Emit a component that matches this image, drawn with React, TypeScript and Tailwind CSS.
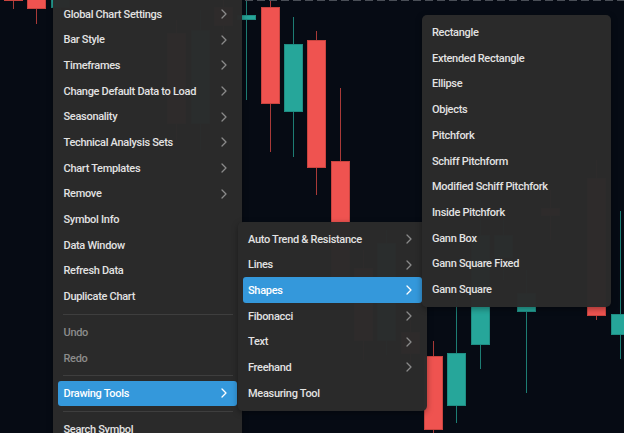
import React from "react";

type Candle = [number, "r" | "t", number, number, number, number];

// x centre, colour, body top, body bottom, wick top, wick bottom
const candles: Candle[] = [
  [13, "r", -20, 0, -30, 9],
  [36.3, "r", -12, 8, -20, 24],
  [59.6, "t", -10, 7, -20, 20],
  [176.3, "r", 33, 123, 20, 140],
  [199.6, "t", 30, 123, 10, 150],
  [223, "r", 7, 25, 0, 40],
  [246.3, "t", 15, 19, -5, 100],
  [269.6, "r", 7, 103, -5, 152],
  [293, "t", 44, 111, 17, 157],
  [316.3, "r", 40, 167, 31, 195],
  [339.6, "r", 161, 277, 88, 300],
  [363, "r", 268, 340, 250, 360],
  [386.3, "t", 243, 340, 230, 355],
  [409.6, "r", 332, 353, 320, 365],
  [433, "r", 356, 429, 341, 440],
  [456.3, "t", 353, 405, 290, 423],
  [479.6, "t", 235, 344, 200, 369],
  [503, "t", 235, 257, 215, 280],
  [526.3, "t", 293, 311, 270, 393],
  [549.6, "r", 208, 215, 190, 240],
  [596.3, "r", 178, 315, 160, 320],
  [619.6, "t", 314, 334, 211, 359],
];

const Chart = () => (
  <svg width={624} height={433} className="block" shapeRendering="crispEdges">
    {candles.map(([x, c, bt, bb, wt, wb], i) => {
      const body = c === "r" ? "#ef5350" : "#26a69a";
      const edge = c === "r" ? "#c9443f" : "#1f8d83";
      const wick = c === "r" ? "#a83a38" : "#1d7d74";
      const left = Math.round(x - 9);
      return (
        <g key={i}>
          <rect x={Math.round(x)} y={wt} width={1} height={wb - wt} fill={wick} />
          <rect x={left} y={bt} width={18} height={Math.max(bb - bt, 2)} fill={body} stroke={edge} strokeWidth={1} />
        </g>
      );
    })}
  </svg>
);

const Chevron = ({ white }: { white?: boolean }) => (
  <svg width="6" height="10" viewBox="0 0 6 10" className="shrink-0">
    <path
      d="M1 1 L5 5 L1 9"
      fill="none"
      stroke={white ? "#ffffff" : "#8a8a8a"}
      strokeWidth="1.3"
      strokeLinecap="round"
      strokeLinejoin="round"
    />
  </svg>
);

interface ItemProps {
  label: string;
  arrow?: boolean;
  active?: boolean;
  disabled?: boolean;
}

const Item = ({ label, arrow, active, disabled }: ItemProps) => (
  <div
    className={`flex h-[25.7px] items-center justify-between rounded-[3px] pl-[5.5px] pr-[10px] ${
      active
        ? "bg-[#3498db] text-white"
        : disabled
        ? "text-[#8c8c8c]"
        : "text-[#e2e2e2]"
    }`}
  >
    <span className="whitespace-nowrap pt-[2px]">{label}</span>
    {arrow && <Chevron white={active} />}
  </div>
);

const Divider = () => (
  <div className="flex h-[10px] items-center px-[4.5px]">
    <div className="h-px w-full bg-[#3e3e3e]" />
  </div>
);

const menuCls =
  "absolute w-[189px] rounded-[5px] bg-[#2b2b2b]/[0.985] px-[5px] text-[11px] font-medium tracking-[-0.3px] shadow-[0_2px_6px_rgba(0,0,0,0.35)] font-['Roboto','Liberation_Sans',sans-serif]";

export default function App() {
  return (
    <div className="relative h-[433px] w-[624px] overflow-hidden bg-[#060b14]">
      <Chart />
      {/* price line */}
      <div className="absolute left-[245px] top-0 h-px w-[379px] bg-[repeating-linear-gradient(90deg,#4a4f57_0_8px,transparent_8px_12px)]" />

      {/* main context menu */}
      <div className={`${menuCls} left-[53px] top-[-4px] pt-[5px] pb-[20px]`}>
        <Item label="Global Chart Settings" arrow />
        <Item label="Bar Style" arrow />
        <Item label="Timeframes" arrow />
        <Item label="Change Default Data to Load" arrow />
        <Item label="Seasonality" arrow />
        <Item label="Technical Analysis Sets" arrow />
        <Item label="Chart Templates" arrow />
        <Item label="Remove" arrow />
        <Item label="Symbol Info" />
        <Item label="Data Window" />
        <Item label="Refresh Data" />
        <Item label="Duplicate Chart" />
        <Divider />
        <Item label="Undo" disabled />
        <Item label="Redo" disabled />
        <Divider />
        <Item label="Drawing Tools" arrow active />
        <Divider />
        <Item label="Search Symbol" />
      </div>

      {/* drawing tools submenu */}
      <div className={`${menuCls} left-[237.5px] top-[221.5px] pt-[4.5px] pb-[5px]`}>
        <Item label="Auto Trend & Resistance" arrow />
        <Item label="Lines" arrow />
        <Item label="Shapes" arrow active />
        <Item label="Fibonacci" arrow />
        <Item label="Text" arrow />
        <Item label="Freehand" arrow />
        <Item label="Measuring Tool" />
      </div>

      {/* shapes submenu */}
      <div className={`${menuCls} left-[421.5px] top-[15px] pt-[4.5px] pb-[5px]`}>
        <Item label="Rectangle" />
        <Item label="Extended Rectangle" />
        <Item label="Ellipse" />
        <Item label="Objects" />
        <Item label="Pitchfork" />
        <Item label="Schiff Pitchform" />
        <Item label="Modified Schiff Pitchfork" />
        <Item label="Inside Pitchfork" />
        <Item label="Gann Box" />
        <Item label="Gann Square Fixed" />
        <Item label="Gann Square" />
      </div>
    </div>
  );
}
